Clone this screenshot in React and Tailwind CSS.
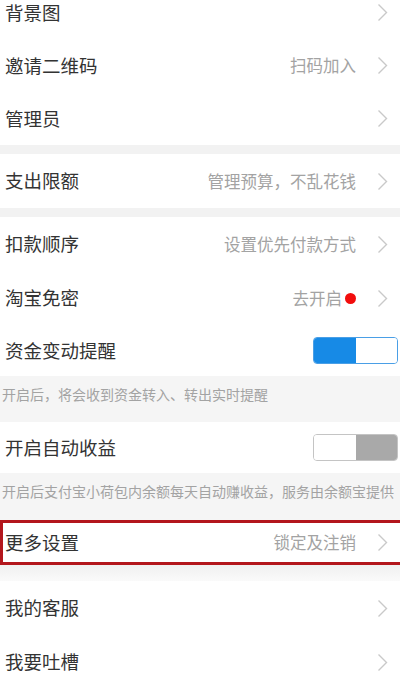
import React from 'react';

const font = { fontFamily: '"Noto Sans CJK SC", "Noto Sans", sans-serif' };

function Chevron() {
  return (
    <svg width="11" height="19" viewBox="0 0 11 19" className="shrink-0 mr-[12px]">
      <path d="M1.5 1.5 L9.5 9.5 L1.5 17.5" fill="none" stroke="#c9c9c9" strokeWidth="1.4" />
    </svg>
  );
}

function Row({ title, hint, dot, className = 'h-[54px]' }) {
  return (
    <div className={`flex items-center bg-white pl-[5px] ${className}`}>
      <span className="flex-1 text-[18.5px] text-[#333]">{title}</span>
      {hint && <span className="text-[16.5px] text-[#a3a3a3]">{hint}</span>}
      {dot && <span className="ml-[3px] w-[11px] h-[11px] rounded-full bg-[#f20d0d]" />}
      <span className="ml-[21px]" />
      <Chevron />
    </div>
  );
}

function Toggle({ on }) {
  return (
    <div
      className={`flex w-[85px] h-[27px] rounded-[4px] overflow-hidden border ${
        on ? 'border-[#4a9fe6]' : 'border-[#c4c4c4]'
      } mr-[2px]`}
    >
      {on ? (
        <>
          <div className="w-1/2 bg-[#178ae6]" />
          <div className="w-1/2 bg-white" />
        </>
      ) : (
        <>
          <div className="w-1/2 bg-white" />
          <div className="w-1/2 bg-[#a9a9a9]" />
        </>
      )}
    </div>
  );
}

function SwitchRow({ title, on, note }) {
  return (
    <>
      <div className="flex items-center bg-white pl-[5px] h-[51px]">
        <span className="flex-1 text-[18.5px] text-[#333]">{title}</span>
        <Toggle on={on} />
      </div>
      <div className="h-[46px] bg-[#f5f5f5] pl-[2px] pt-[8px] text-[14px] leading-[20px] text-[#a3a3a3] whitespace-nowrap">
        {note}
      </div>
    </>
  );
}

export default function App() {
  return (
    <div className="w-[400px] h-[676px] overflow-hidden bg-white" style={font}>
      {/* top row is scrolled partly out of view */}
      <div className="flex items-start bg-white pl-[5px] h-[39px]">
        <span className="flex-1 text-[18.5px] leading-[24px] text-[#333]">背景图</span>
        <span className="mt-[3px] flex">
          <Chevron />
        </span>
      </div>
      <Row title="邀请二维码" hint="扫码加入" className="h-[53px]" />
      <Row title="管理员" className="h-[53px]" />
      <div className="h-[9px] bg-[#f2f2f2]" />
      <Row title="支出限额" hint="管理预算，不乱花钱" />
      <div className="h-[9px] bg-[#f2f2f2]" />
      <Row title="扣款顺序" hint="设置优先付款方式" />
      <Row title="淘宝免密" hint="去开启" dot />
      <SwitchRow title="资金变动提醒" on note="开启后，将会收到资金转入、转出实时提醒" />
      <SwitchRow title="开启自动收益" on={false} note="开启后支付宝小荷包内余额每天自动赚收益，服务由余额宝提供" />
      <div className="h-[1px] bg-[#f5f5f5]" />
      <div className="flex items-center h-[45px] bg-white border-y-[3px] border-l-[3px] border-[#b3161c] pl-[2px]">
        <span className="flex-1 text-[18.5px] text-[#333]">更多设置</span>
        <span className="text-[16.5px] text-[#a3a3a3]">锁定及注销</span>
        <span className="ml-[21px]" />
        <Chevron />
      </div>
      <div className="h-[16px] bg-gradient-to-b from-[#f0f0f0] to-[#fafafa]" />
      <Row title="我的客服" />
      <Row title="我要吐槽" />
    </div>
  );
}
